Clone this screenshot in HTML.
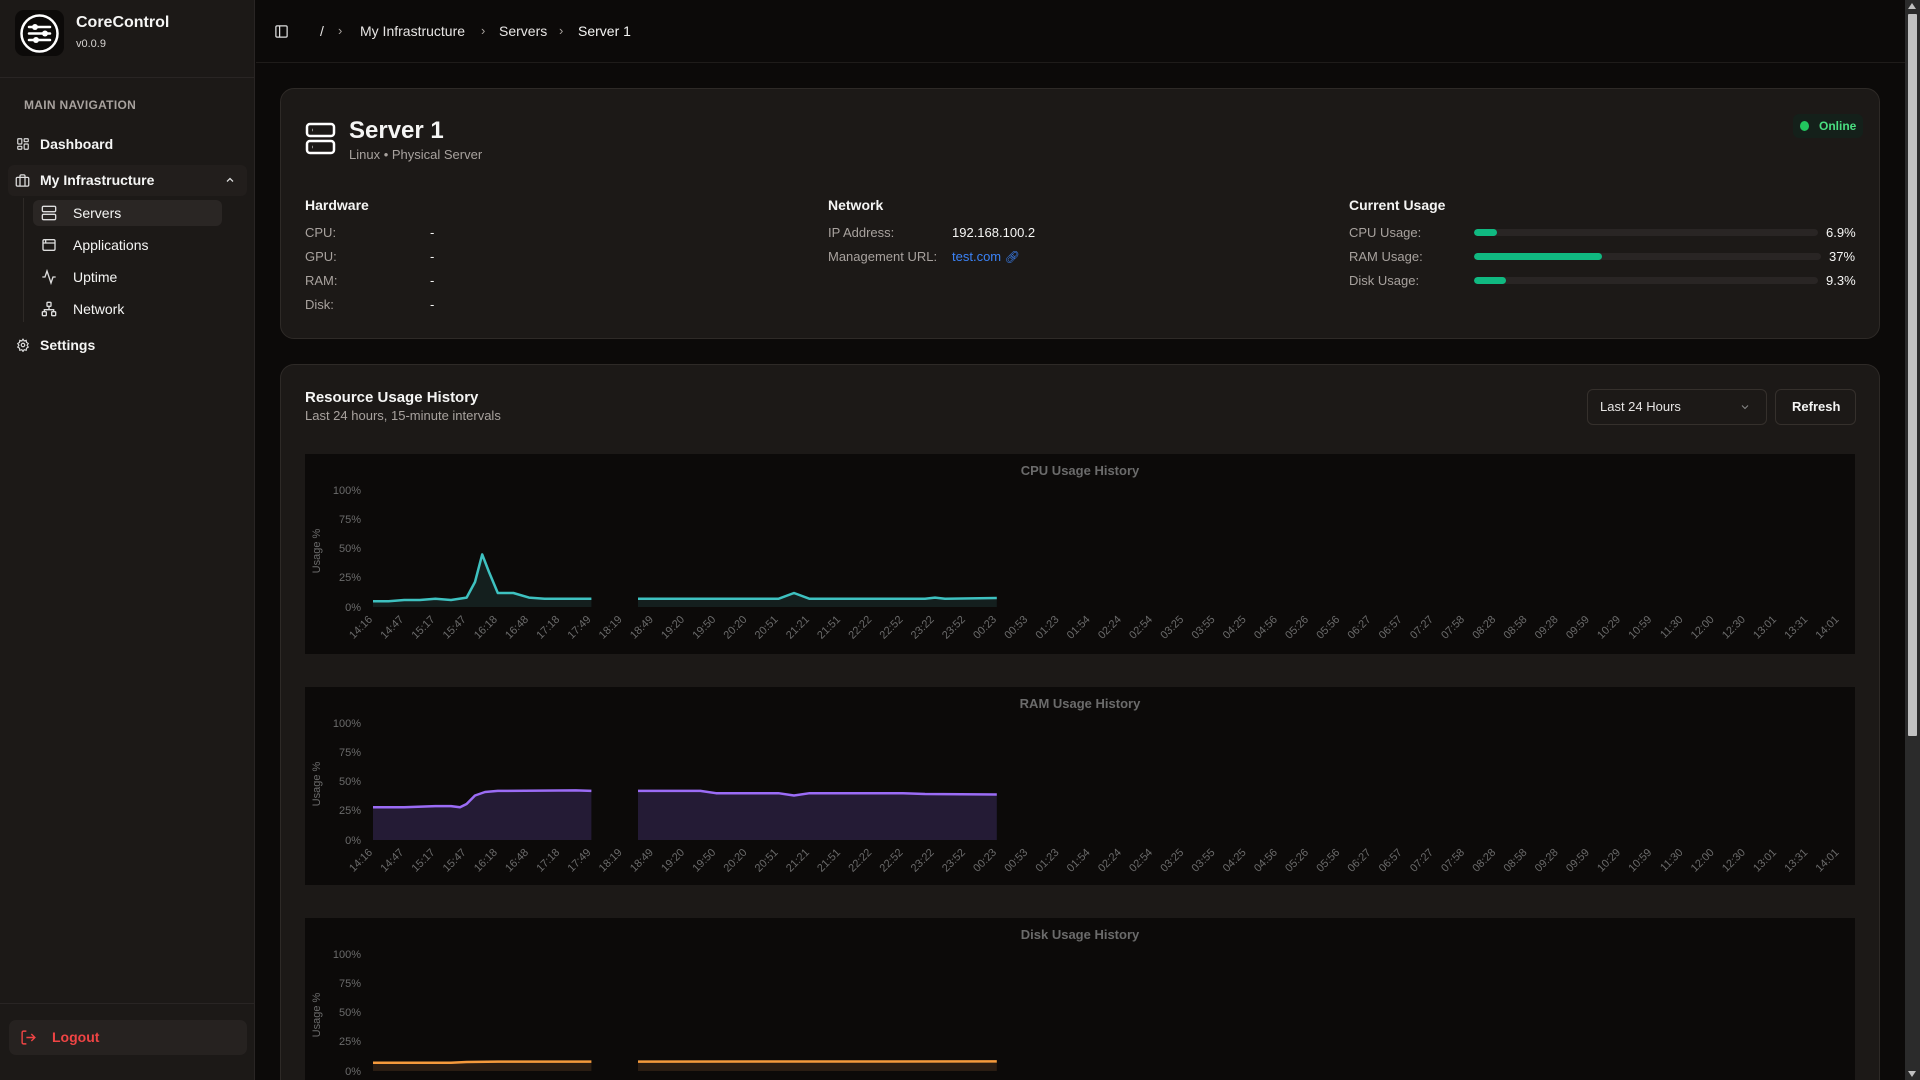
<!DOCTYPE html>
<html><head><meta charset="utf-8"><style>
*{box-sizing:border-box;margin:0;padding:0}
html{width:1920px;height:1080px;overflow:hidden}
body{width:1920px;height:1080px;overflow:hidden;background:#0c0a09;font-family:"Liberation Sans",sans-serif;color:#f5f5f4;position:relative}
.a{position:absolute}
#side{left:0;top:0;width:255px;height:1080px;background:#1c1917;border-right:1px solid #292524}
.nav{position:absolute;font-size:14px;font-weight:bold;color:#f5f5f4}
.sub{position:absolute;font-size:14px;color:#f5f5f4}
.card{position:absolute;background:#1c1917;border:1px solid #2e2a27;border-radius:14px}
.lbl{position:absolute;font-size:13px;color:#a8a29e}
.val{position:absolute;font-size:13px;color:#f5f5f4}
.h{position:absolute;font-size:14px;font-weight:bold;color:#f5f5f4}
.bar{position:absolute;height:7px;background:#292524;border-radius:4px;overflow:hidden}
.bar i{display:block;height:7px;background:#10b981;border-radius:4px}
.panel{position:absolute;left:305px;width:1550px;background:#0c0a09}
svg text{font-family:"Liberation Sans",sans-serif}
</style></head><body>
<div id="side" class="a">
  <div class="a" style="left:15px;top:10px;width:49px;height:46px;background:#0c0a09;border-radius:9px"></div>
  <svg class="a" style="left:18px;top:12px" width="43" height="43" viewBox="0 0 43 43"><circle cx="21.5" cy="21.5" r="18" fill="none" stroke="#fff" stroke-width="2.5"/><g stroke="#fff" stroke-width="2.5" stroke-linecap="round"><line x1="11" y1="15" x2="32" y2="15"/><line x1="11" y1="21.5" x2="32" y2="21.5"/><line x1="11" y1="28" x2="32" y2="28"/></g><g fill="#fff"><circle cx="17" cy="15" r="3"/><circle cx="27" cy="21.5" r="3"/><circle cx="18" cy="28" r="3"/></g></svg>
  <div class="a" style="left:76px;top:14px;font-size:16px;font-weight:bold">CoreControl</div>
  <div class="a" style="left:76px;top:38px;font-size:11px;color:#d6d3d1">v0.0.9</div>
  <div class="a" style="left:0;top:77px;width:255px;height:1px;background:#292524"></div>
  <div class="a" style="left:24px;top:98px;font-size:12px;font-weight:bold;color:#a8a29e;letter-spacing:.3px">MAIN NAVIGATION</div>
  <svg class="a" style="left:16px;top:137px" width="14" height="14" viewBox="0 0 24 24" fill="none" stroke="#ddd" stroke-width="2"><rect x="3" y="3" width="7" height="9" rx="1"/><rect x="14" y="3" width="7" height="5" rx="1"/><rect x="14" y="12" width="7" height="9" rx="1"/><rect x="3" y="16" width="7" height="5" rx="1"/></svg>
  <div class="nav" style="left:40px;top:136px">Dashboard</div>
  <div class="a" style="left:8px;top:165px;width:239px;height:31px;background:#221e1c;border-radius:6px"></div>
  <svg class="a" style="left:15px;top:173px" width="15" height="15" viewBox="0 0 24 24" fill="none" stroke="#ddd" stroke-width="2"><rect x="2" y="7" width="20" height="14" rx="2"/><path d="M16 21V5a2 2 0 0 0-2-2h-4a2 2 0 0 0-2 2v16"/></svg>
  <div class="nav" style="left:40px;top:172px">My Infrastructure</div>
  <svg class="a" style="left:224px;top:174px" width="12" height="12" viewBox="0 0 24 24" fill="none" stroke="#ddd" stroke-width="2.5"><path d="M6 15l6-6 6 6"/></svg>
  <div class="a" style="left:23px;top:198px;width:1px;height:124px;background:#2e2a27"></div>
  <div class="a" style="left:33px;top:200px;width:189px;height:26px;background:#2a2624;border-radius:6px"></div>
  <svg class="a" style="left:41px;top:205px" width="16" height="16" viewBox="0 0 24 24" fill="none" stroke="#ddd" stroke-width="2"><rect x="2" y="2" width="20" height="8" rx="2"/><rect x="2" y="14" width="20" height="8" rx="2"/><path d="M6 6h.01M6 18h.01"/></svg>
  <div class="sub" style="left:73px;top:205px">Servers</div>
  <svg class="a" style="left:41px;top:237px" width="16" height="16" viewBox="0 0 24 24" fill="none" stroke="#ddd" stroke-width="2"><rect x="3" y="4" width="18" height="16" rx="2"/><path d="M3 9h18M7 4v5"/></svg>
  <div class="sub" style="left:73px;top:237px">Applications</div>
  <svg class="a" style="left:41px;top:269px" width="16" height="16" viewBox="0 0 24 24" fill="none" stroke="#ddd" stroke-width="2"><path d="M22 12h-4l-3 9L9 3l-3 9H2"/></svg>
  <div class="sub" style="left:73px;top:269px">Uptime</div>
  <svg class="a" style="left:41px;top:301px" width="16" height="16" viewBox="0 0 24 24" fill="none" stroke="#ddd" stroke-width="2"><rect x="9" y="2" width="6" height="6" rx="1"/><rect x="2" y="16" width="6" height="6" rx="1"/><rect x="16" y="16" width="6" height="6" rx="1"/><path d="M5 16v-3h14v3M12 8v5"/></svg>
  <div class="sub" style="left:73px;top:301px">Network</div>
  <svg class="a" style="left:16px;top:338px" width="14" height="14" viewBox="0 0 24 24" fill="none" stroke="#ddd" stroke-width="2"><circle cx="12" cy="12" r="3"/><path d="M12 2l2 3 3.5-1 .5 3.5 3 2-2 3 2 3-3 2-.5 3.5-3.5-1-2 3-2-3-3.5 1-.5-3.5-3-2 2-3-2-3 3-2 .5-3.5 3.5 1z"/></svg>
  <div class="nav" style="left:40px;top:337px">Settings</div>
  <div class="a" style="left:0;top:1003px;width:255px;height:1px;background:#292524"></div>
  <div class="a" style="left:9px;top:1020px;width:238px;height:35px;background:#262220;border-radius:7px"></div>
  <svg class="a" style="left:20px;top:1029px" width="17" height="17" viewBox="0 0 24 24" fill="none" stroke="#ef4444" stroke-width="2"><path d="M9 21H5a2 2 0 0 1-2-2V5a2 2 0 0 1 2-2h4M16 17l5-5-5-5M21 12H9"/></svg>
  <div class="a" style="left:52px;top:1029px;font-size:14px;font-weight:bold;color:#ef4444">Logout</div>
</div>

<div class="a" style="left:256px;top:62px;width:1649px;height:1px;background:#1f1c1a"></div>
<svg class="a" style="left:274px;top:24px" width="15" height="15" viewBox="0 0 24 24" fill="none" stroke="#ddd" stroke-width="2"><rect x="3" y="3" width="18" height="18" rx="2"/><path d="M9 3v18"/></svg>
<div class="a" style="left:320px;top:23px;font-size:14px;color:#e7e5e4">/</div>
<div class="a" style="left:338px;top:23px;font-size:13px;color:#a8a29e">›</div>
<div class="a" style="left:360px;top:23px;font-size:14px;color:#e7e5e4">My Infrastructure</div>
<div class="a" style="left:481px;top:23px;font-size:13px;color:#a8a29e">›</div>
<div class="a" style="left:499px;top:23px;font-size:14px;color:#e7e5e4">Servers</div>
<div class="a" style="left:559px;top:23px;font-size:13px;color:#a8a29e">›</div>
<div class="a" style="left:578px;top:23px;font-size:14px;color:#f5f5f4">Server 1</div>

<div class="card" style="left:280px;top:88px;width:1600px;height:251px"></div>
<svg class="a" style="left:305px;top:122px" width="31" height="33" viewBox="0 0 31 33" fill="none" stroke="#fff" stroke-width="2.5"><rect x="2" y="2" width="27" height="12" rx="3"/><rect x="2" y="19" width="27" height="12" rx="3"/><path d="M7 8h.5M7 25h.5"/></svg>
<div class="a" style="left:349px;top:117px;font-size:24px;font-weight:bold">Server 1</div>
<div class="a" style="left:349px;top:147px;font-size:13px;color:#a8a29e">Linux • Physical Server</div>
<div class="a" style="left:1793px;top:114px;width:70px;height:24px;background:#14201a;border-radius:6px"></div>
<div class="a" style="left:1800px;top:121px;width:9px;height:10px;border-radius:50%;background:#22c55e"></div>
<div class="a" style="left:1819px;top:119px;font-size:12px;font-weight:bold;color:#4ade80">Online</div>

<div class="h" style="left:305px;top:197px">Hardware</div>
<div class="lbl" style="left:305px;top:225px">CPU:</div><div class="val" style="left:430px;top:225px">-</div>
<div class="lbl" style="left:305px;top:249px">GPU:</div><div class="val" style="left:430px;top:249px">-</div>
<div class="lbl" style="left:305px;top:273px">RAM:</div><div class="val" style="left:430px;top:273px">-</div>
<div class="lbl" style="left:305px;top:297px">Disk:</div><div class="val" style="left:430px;top:297px">-</div>

<div class="h" style="left:828px;top:197px">Network</div>
<div class="lbl" style="left:828px;top:225px">IP Address:</div><div class="val" style="left:952px;top:225px">192.168.100.2</div>
<div class="lbl" style="left:828px;top:249px">Management URL:</div><div class="val" style="left:952px;top:249px;color:#3b82f6">test.com <span style="font-size:12px">🔗&#xFE0E;</span></div>

<div class="h" style="left:1349px;top:197px">Current Usage</div>
<div class="lbl" style="left:1349px;top:225px">CPU Usage:</div><div class="bar" style="left:1474px;top:229px;width:344px"><i style="width:23px"></i></div><div class="val" style="left:1826px;top:225px">6.9%</div>
<div class="lbl" style="left:1349px;top:249px">RAM Usage:</div><div class="bar" style="left:1474px;top:253px;width:347px"><i style="width:128px"></i></div><div class="val" style="left:1829px;top:249px">37%</div>
<div class="lbl" style="left:1349px;top:273px">Disk Usage:</div><div class="bar" style="left:1474px;top:277px;width:344px"><i style="width:32px"></i></div><div class="val" style="left:1826px;top:273px">9.3%</div>

<div class="card" style="left:280px;top:364px;width:1600px;height:716px;border-bottom:none;border-radius:14px 14px 0 0"></div>
<div class="h" style="left:305px;top:389px;font-size:15px">Resource Usage History</div>
<div class="a" style="left:305px;top:408px;font-size:13px;color:#a8a29e">Last 24 hours, 15-minute intervals</div>
<div class="a" style="left:1587px;top:389px;width:180px;height:36px;border:1px solid #35302c;border-radius:6px;background:#1c1917"></div>
<div class="a" style="left:1600px;top:399px;font-size:13px;color:#e7e5e4">Last 24 Hours</div>
<svg class="a" style="left:1739px;top:401px" width="12" height="12" viewBox="0 0 24 24" fill="none" stroke="#888" stroke-width="2"><path d="M6 9l6 6 6-6"/></svg>
<div class="a" style="left:1775px;top:389px;width:81px;height:36px;border:1px solid #35302c;border-radius:6px;background:#1c1917"></div>
<div class="a" style="left:1792px;top:399px;font-size:13px;font-weight:bold">Refresh</div>

<!-- CPU chart -->
<svg class="panel" style="top:454px" width="1550" height="200" viewBox="0 0 1550 200">
<rect width="1550" height="200" fill="#0c0a09"/>
<text x="775" y="21" text-anchor="middle" font-size="13" font-weight="bold" fill="#6b6b6b">CPU Usage History</text>
<g font-size="11" fill="#6b6b6b" text-anchor="end"><text x="56" y="40">100%</text><text x="56" y="69">75%</text><text x="56" y="98">50%</text><text x="56" y="127">25%</text><text x="56" y="157">0%</text></g>
<text transform="translate(15 97) rotate(-90)" text-anchor="middle" font-size="11" fill="#6b6b6b">Usage %</text>
<path d="M68,147.2 L83.6,147.2 99.2,146 114.8,146 130.4,144.8 146,146 161.6,143.6 170,128 177.2,100.4 184,118 192.8,139 208.4,139 224,143.6 239.6,144.8 255.2,144.8 270.8,144.8 286.4,144.8 L286.4,153 L68,153 Z" fill="#141f1e"/>
<path d="M68,147.2 L83.6,147.2 99.2,146 114.8,146 130.4,144.8 146,146 161.6,143.6 170,128 177.2,100.4 184,118 192.8,139 208.4,139 224,143.6 239.6,144.8 255.2,144.8 270.8,144.8 286.4,144.8" fill="none" stroke="#3ec1c0" stroke-width="2.5" stroke-linejoin="round"/>
<path d="M333,144.8 L473.4,144.8 489,139 504.6,144.8 620,144.8 630,143.6 640,144.8 691.8,144 L691.8,153 L333,153 Z" fill="#141f1e"/>
<path d="M333,144.8 L473.4,144.8 489,139 504.6,144.8 620,144.8 630,143.6 640,144.8 691.8,144" fill="none" stroke="#3ec1c0" stroke-width="2.5" stroke-linejoin="round"/>
<g font-size="11" fill="#6b6b6b" text-anchor="end">
<text transform="translate(68 166) rotate(-45)">14:16</text><text transform="translate(99.2 166) rotate(-45)">14:47</text><text transform="translate(130.4 166) rotate(-45)">15:17</text><text transform="translate(161.6 166) rotate(-45)">15:47</text><text transform="translate(192.8 166) rotate(-45)">16:18</text><text transform="translate(224 166) rotate(-45)">16:48</text><text transform="translate(255.2 166) rotate(-45)">17:18</text><text transform="translate(286.4 166) rotate(-45)">17:49</text><text transform="translate(317.6 166) rotate(-45)">18:19</text><text transform="translate(348.8 166) rotate(-45)">18:49</text><text transform="translate(380 166) rotate(-45)">19:20</text><text transform="translate(411.2 166) rotate(-45)">19:50</text><text transform="translate(442.4 166) rotate(-45)">20:20</text><text transform="translate(473.6 166) rotate(-45)">20:51</text><text transform="translate(504.8 166) rotate(-45)">21:21</text><text transform="translate(536 166) rotate(-45)">21:51</text><text transform="translate(567.2 166) rotate(-45)">22:22</text><text transform="translate(598.4 166) rotate(-45)">22:52</text><text transform="translate(629.6 166) rotate(-45)">23:22</text><text transform="translate(660.8 166) rotate(-45)">23:52</text><text transform="translate(692 166) rotate(-45)">00:23</text><text transform="translate(723.2 166) rotate(-45)">00:53</text><text transform="translate(754.4 166) rotate(-45)">01:23</text><text transform="translate(785.6 166) rotate(-45)">01:54</text><text transform="translate(816.8 166) rotate(-45)">02:24</text><text transform="translate(848 166) rotate(-45)">02:54</text><text transform="translate(879.2 166) rotate(-45)">03:25</text><text transform="translate(910.4 166) rotate(-45)">03:55</text><text transform="translate(941.6 166) rotate(-45)">04:25</text><text transform="translate(972.8 166) rotate(-45)">04:56</text><text transform="translate(1004 166) rotate(-45)">05:26</text><text transform="translate(1035.2 166) rotate(-45)">05:56</text><text transform="translate(1066.4 166) rotate(-45)">06:27</text><text transform="translate(1097.6 166) rotate(-45)">06:57</text><text transform="translate(1128.8 166) rotate(-45)">07:27</text><text transform="translate(1160 166) rotate(-45)">07:58</text><text transform="translate(1191.2 166) rotate(-45)">08:28</text><text transform="translate(1222.4 166) rotate(-45)">08:58</text><text transform="translate(1253.6 166) rotate(-45)">09:28</text><text transform="translate(1284.8 166) rotate(-45)">09:59</text><text transform="translate(1316 166) rotate(-45)">10:29</text><text transform="translate(1347.2 166) rotate(-45)">10:59</text><text transform="translate(1378.4 166) rotate(-45)">11:30</text><text transform="translate(1409.6 166) rotate(-45)">12:00</text><text transform="translate(1440.8 166) rotate(-45)">12:30</text><text transform="translate(1472 166) rotate(-45)">13:01</text><text transform="translate(1503.2 166) rotate(-45)">13:31</text><text transform="translate(1534.4 166) rotate(-45)">14:01</text>
</g>
</svg>

<!-- RAM chart -->
<svg class="panel" style="top:687px" width="1550" height="198" viewBox="0 0 1550 198">
<rect width="1550" height="198" fill="#0c0a09"/>
<text x="775" y="21" text-anchor="middle" font-size="13" font-weight="bold" fill="#6b6b6b">RAM Usage History</text>
<g font-size="11" fill="#6b6b6b" text-anchor="end"><text x="56" y="40">100%</text><text x="56" y="69">75%</text><text x="56" y="98">50%</text><text x="56" y="127">25%</text><text x="56" y="157">0%</text></g>
<text transform="translate(15 97) rotate(-90)" text-anchor="middle" font-size="11" fill="#6b6b6b">Usage %</text>
<path d="M68,120.2 L99.2,120.2 130.4,119.1 146,119.1 155,120.2 161.6,117 170,108.5 180,105 192.8,103.9 270.8,103.4 286.4,103.9 L286.4,153 L68,153 Z" fill="#241b35"/>
<path d="M68,120.2 L99.2,120.2 130.4,119.1 146,119.1 155,120.2 161.6,117 170,108.5 180,105 192.8,103.9 270.8,103.4 286.4,103.9" fill="none" stroke="#9b6cf6" stroke-width="2.5" stroke-linejoin="round"/>
<path d="M333,103.9 L395.4,103.9 411,106.2 473.4,106.2 489,108.5 504.6,106.2 598,106.2 620,107 691.8,107.5 L691.8,153 L333,153 Z" fill="#241b35"/>
<path d="M333,103.9 L395.4,103.9 411,106.2 473.4,106.2 489,108.5 504.6,106.2 598,106.2 620,107 691.8,107.5" fill="none" stroke="#9b6cf6" stroke-width="2.5" stroke-linejoin="round"/>
<g font-size="11" fill="#6b6b6b" text-anchor="end">
<text transform="translate(68 166) rotate(-45)">14:16</text><text transform="translate(99.2 166) rotate(-45)">14:47</text><text transform="translate(130.4 166) rotate(-45)">15:17</text><text transform="translate(161.6 166) rotate(-45)">15:47</text><text transform="translate(192.8 166) rotate(-45)">16:18</text><text transform="translate(224 166) rotate(-45)">16:48</text><text transform="translate(255.2 166) rotate(-45)">17:18</text><text transform="translate(286.4 166) rotate(-45)">17:49</text><text transform="translate(317.6 166) rotate(-45)">18:19</text><text transform="translate(348.8 166) rotate(-45)">18:49</text><text transform="translate(380 166) rotate(-45)">19:20</text><text transform="translate(411.2 166) rotate(-45)">19:50</text><text transform="translate(442.4 166) rotate(-45)">20:20</text><text transform="translate(473.6 166) rotate(-45)">20:51</text><text transform="translate(504.8 166) rotate(-45)">21:21</text><text transform="translate(536 166) rotate(-45)">21:51</text><text transform="translate(567.2 166) rotate(-45)">22:22</text><text transform="translate(598.4 166) rotate(-45)">22:52</text><text transform="translate(629.6 166) rotate(-45)">23:22</text><text transform="translate(660.8 166) rotate(-45)">23:52</text><text transform="translate(692 166) rotate(-45)">00:23</text><text transform="translate(723.2 166) rotate(-45)">00:53</text><text transform="translate(754.4 166) rotate(-45)">01:23</text><text transform="translate(785.6 166) rotate(-45)">01:54</text><text transform="translate(816.8 166) rotate(-45)">02:24</text><text transform="translate(848 166) rotate(-45)">02:54</text><text transform="translate(879.2 166) rotate(-45)">03:25</text><text transform="translate(910.4 166) rotate(-45)">03:55</text><text transform="translate(941.6 166) rotate(-45)">04:25</text><text transform="translate(972.8 166) rotate(-45)">04:56</text><text transform="translate(1004 166) rotate(-45)">05:26</text><text transform="translate(1035.2 166) rotate(-45)">05:56</text><text transform="translate(1066.4 166) rotate(-45)">06:27</text><text transform="translate(1097.6 166) rotate(-45)">06:57</text><text transform="translate(1128.8 166) rotate(-45)">07:27</text><text transform="translate(1160 166) rotate(-45)">07:58</text><text transform="translate(1191.2 166) rotate(-45)">08:28</text><text transform="translate(1222.4 166) rotate(-45)">08:58</text><text transform="translate(1253.6 166) rotate(-45)">09:28</text><text transform="translate(1284.8 166) rotate(-45)">09:59</text><text transform="translate(1316 166) rotate(-45)">10:29</text><text transform="translate(1347.2 166) rotate(-45)">10:59</text><text transform="translate(1378.4 166) rotate(-45)">11:30</text><text transform="translate(1409.6 166) rotate(-45)">12:00</text><text transform="translate(1440.8 166) rotate(-45)">12:30</text><text transform="translate(1472 166) rotate(-45)">13:01</text><text transform="translate(1503.2 166) rotate(-45)">13:31</text><text transform="translate(1534.4 166) rotate(-45)">14:01</text>
</g>
</svg>

<!-- Disk chart -->
<svg class="panel" style="top:918px" width="1550" height="162" viewBox="0 0 1550 162">
<rect width="1550" height="162" fill="#0c0a09"/>
<text x="775" y="21" text-anchor="middle" font-size="13" font-weight="bold" fill="#6b6b6b">Disk Usage History</text>
<g font-size="11" fill="#6b6b6b" text-anchor="end"><text x="56" y="40">100%</text><text x="56" y="69">75%</text><text x="56" y="98">50%</text><text x="56" y="127">25%</text><text x="56" y="157">0%</text></g>
<text transform="translate(15 97) rotate(-90)" text-anchor="middle" font-size="11" fill="#6b6b6b">Usage %</text>
<path d="M68,144.8 L146,144.8 161.6,144 192.8,143.6 286.4,143.6 L286.4,153 L68,153 Z" fill="#2a1d13"/>
<path d="M68,144.8 L146,144.8 161.6,144 192.8,143.6 286.4,143.6" fill="none" stroke="#f59a3c" stroke-width="2.5"/>
<path d="M333,143.6 L691.8,143.4 L691.8,153 L333,153 Z" fill="#2a1d13"/>
<path d="M333,143.6 L691.8,143.4" fill="none" stroke="#f59a3c" stroke-width="2.5"/>
</svg>

<!-- scrollbar -->
<div class="a" style="left:1905px;top:0;width:15px;height:1080px;background:#2b2b2b"></div>
<div class="a" style="left:1908px;top:14px;width:9px;height:722px;background:#c1c1c1;border-radius:1px"></div>
<div class="a" style="left:1908px;top:3px;width:0;height:0;border-left:4px solid transparent;border-right:4px solid transparent;border-bottom:6px solid #c1c1c1"></div>
<div class="a" style="left:1908px;top:1071px;width:0;height:0;border-left:4px solid transparent;border-right:4px solid transparent;border-top:6px solid #c1c1c1"></div>
</body></html>
